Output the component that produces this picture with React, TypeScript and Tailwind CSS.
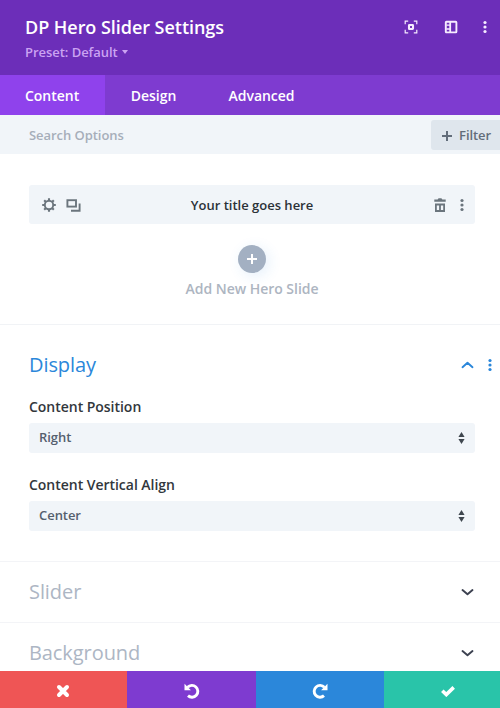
import type { ReactNode } from "react";

const Dots = ({ className }: { className?: string }) => (
  <svg className={className} width="4" height="14" viewBox="0 0 4 14" fill="currentColor">
    <circle cx="2" cy="2.5" r="1.6" />
    <circle cx="2" cy="7" r="1.6" />
    <circle cx="2" cy="11.5" r="1.6" />
  </svg>
);

const FocusIcon = () => (
  <svg width="14" height="14" viewBox="0 0 14 14" fill="none" stroke="currentColor">
    <path d="M1.2 4.2V1.2h3M9.8 1.2h3v3M12.8 9.8v3h-3M4.2 12.8h-3v-3" strokeWidth="1.2" />
    <rect x="5" y="5" width="4" height="4" rx="0.4" strokeWidth="2.1" />
  </svg>
);

const LayoutIcon = () => (
  <svg width="14" height="14" viewBox="0 0 14 14" fill="none" stroke="currentColor">
    <rect x="1.8" y="1.8" width="10.6" height="10.6" rx="0.6" strokeWidth="1.9" />
    <path d="M6.2 1.5v11" strokeWidth="1.8" />
    <path d="M2.4 5.2h4M2.4 9h4" strokeWidth="1.3" />
  </svg>
);

const GearIcon = () => (
  <svg width="14" height="14" viewBox="0 0 14 14" fill="none" stroke="currentColor">
    <circle cx="7" cy="7" r="4.2" strokeWidth="1.9" />
    <path
      d="M7 0.2v2.4M7 11.4v2.4M0.2 7h2.4M11.4 7h2.4M2.2 2.2l1.7 1.7M10.1 10.1l1.7 1.7M2.2 11.8l1.7-1.7M10.1 3.9l1.7-1.7"
      strokeWidth="2.1"
    />
  </svg>
);

const CloneIcon = () => (
  <svg width="15" height="13" viewBox="0 0 15 13" fill="none" stroke="currentColor" strokeWidth="1.9">
    <rect x="1.4" y="1.2" width="8.6" height="6.4" />
    <path d="M13.6 4.6v7.2H5" />
  </svg>
);

const TrashIcon = () => (
  <svg width="12" height="14" viewBox="0 0 12 14" fill="currentColor">
    <path d="M0.3 1.6h3.3L4.6 0.2h2.8l1 1.4h3.3v2.2H0.3z" />
    <path fillRule="evenodd" d="M1 5.4h10V14H1zM2.8 7.4v4.6h2.3V7.4zM6.9 7.4v4.6h2.3V7.4z" />
  </svg>
);

const Chevron = ({ up }: { up?: boolean }) => (
  <svg width="13" height="8" viewBox="0 0 13 8" fill="none" stroke="currentColor" strokeWidth="1.9" strokeLinecap="round" strokeLinejoin="round">
    <path d={up ? "M1.5 6.2L6.5 1.7l5 4.5" : "M1.5 2l5 4.3 5-4.3"} />
  </svg>
);

const Plus = () => (
  <svg width="10" height="10" viewBox="0 0 10 10" fill="none" stroke="currentColor" strokeWidth="2">
    <path d="M5 0v10M0 5h10" />
  </svg>
);

const SelectField = ({ label, value }: { label: string; value: string }) => (
  <div className="h-[78px] pr-[25px] pl-[29px]">
    <div className="h-[26px] text-[14px] leading-[19px] font-semibold tracking-[-0.03px] text-[#32373c]">{label}</div>
    <div className="flex h-[30px] items-center justify-between rounded-[3px] bg-[#f1f5f9] pr-[10px] pl-[10px] text-[13px] font-semibold tracking-[-0.05px] text-[#55606e]">
      {value}
      <svg width="7" height="12" viewBox="0 0 7 12" fill="#3f474f">
        <path d="M3.5 0L6.6 5H0.4zM3.5 12L6.6 7H0.4z" />
      </svg>
    </div>
  </div>
);

const ClosedSection = ({ title }: { title: string }) => (
  <div className="flex h-[61px] items-center justify-between border-t border-[#f3f4f7] pr-[26px] pl-[29px] text-[#3c4150]">
    <span className="text-[20px] tracking-[-0.08px] text-[#adb6c4]">{title}</span>
    <Chevron />
  </div>
);

const FooterButton = ({ className, children }: { className: string; children: ReactNode }) => (
  <button className={`flex h-[37px] items-center justify-center pt-[3px] ${className}`}>{children}</button>
);

export default function App() {
  return (
    <div className="flex h-[708px] w-[500px] flex-col overflow-hidden bg-white font-['Open_Sans',sans-serif]">
      <header className="flex h-[75px] shrink-0 justify-between bg-[#6c2eb9] pr-[13px] pl-[25px] text-white">
        <div className="pt-[15px]">
          <h1 className="text-[18px] leading-[25px] font-semibold tracking-[-0.04px]">DP Hero Slider Settings</h1>
          <div className="mt-[2px] flex items-center gap-[4px] text-[13px] leading-[20px] font-semibold tracking-[-0.04px] text-[#cba3f2]">
            Preset: Default
            <svg width="6" height="4" viewBox="0 0 6 4" fill="currentColor">
              <path d="M0 0h6L3 4z" />
            </svg>
          </div>
        </div>
        <div className="mt-[20px] flex h-[14px] items-center text-[#f6ecff]">
          <FocusIcon />
          <span className="w-[26px]" />
          <LayoutIcon />
          <Dots className="ml-[25px]" />
        </div>
      </header>

      <nav className="flex h-[40px] shrink-0 bg-[#7e3bd0] text-[14px] font-semibold tracking-[-0.03px] text-white">
        <div className="flex w-[105px] items-center bg-[#8f42ec] pl-[25px]">Content</div>
        <div className="flex w-[97px] items-center justify-center">Design</div>
        <div className="flex w-[119px] items-center justify-center">Advanced</div>
      </nav>

      <div className="flex h-[39px] shrink-0 items-center justify-between bg-[#f1f5f9] pt-px pl-[29px]">
        <span className="pt-px text-[13px] font-semibold tracking-[-0.05px] text-[#a6aeb9]">Search Options</span>
        <button className="flex h-[30px] w-[69px] items-center gap-[7px] rounded-l-[3px] bg-[#dfe6ed] pt-px pl-[11px] text-[13px] font-semibold tracking-[-0.05px] text-[#626d7a]">
          <Plus />
          Filter
        </button>
      </div>

      <main className="min-h-0 flex-1 overflow-hidden">
        <div className="h-[170px] pt-[31px] pr-[25px] pl-[29px]">
          <div className="flex h-[39px] items-center rounded-[3px] bg-[#f1f5f9] pr-[11px] pl-[13px] text-[#6b757d]">
            <div className="flex w-[48px] items-center gap-[10px] pt-px">
              <GearIcon />
              <CloneIcon />
            </div>
            <span className="flex-1 pt-[2px] pr-[20px] text-center text-[13px] font-semibold text-[#2b3137]">Your title goes here</span>
            <div className="flex items-center gap-[14px] pt-px">
              <TrashIcon />
              <Dots />
            </div>
          </div>
          <div className="mt-[21px] flex flex-col items-center">
            <button className="flex size-[28px] items-center justify-center rounded-full bg-[#a3b0c2] text-white shadow-[3px_3px_14px_rgba(43,135,218,0.12)]">
              <Plus />
            </button>
            <span className="mt-[6px] text-[14px] leading-[20px] font-semibold tracking-[-0.03px] text-[#adb5c1]">Add New Hero Slide</span>
          </div>
        </div>

        <section className="h-[237px] border-t border-[#f1f3f6]">
          <div className="flex h-[72px] items-center justify-between pt-[8px] pr-[8px] pl-[29px] text-[#2b87da]">
            <h2 className="text-[20px] leading-[28px] tracking-[-0.08px]">Display</h2>
            <div className="flex items-center gap-[14px]">
              <Chevron up />
              <Dots />
            </div>
          </div>
          <SelectField label="Content Position" value="Right" />
          <SelectField label="Content Vertical Align" value="Center" />
        </section>

        <ClosedSection title="Slider" />
        <ClosedSection title="Background" />
      </main>

      <footer className="flex h-[37px] shrink-0 text-white">
        <FooterButton className="w-[127px] bg-[#ef5555] pr-[2px]">
          <svg width="14" height="14" viewBox="0 0 14 14" stroke="currentColor" strokeWidth="4" strokeLinecap="round">
            <path d="M3 3l8 8M11 3l-8 8" />
          </svg>
        </FooterButton>
        <FooterButton className="w-[129px] bg-[#7e3bd0]">
          <svg width="16" height="16" viewBox="0 0 16 16" fill="none" stroke="currentColor" strokeWidth="2.9">
            <path d="M3.6 4.3A5.9 5.9 0 1 1 4 12.7" />
            <path d="M0.5 0.8v6.4h6.4z" fill="currentColor" stroke="none" />
          </svg>
        </FooterButton>
        <FooterButton className="w-[128px] bg-[#2b87da]">
          <svg width="16" height="16" viewBox="0 0 16 16" fill="none" stroke="currentColor" strokeWidth="2.9">
            <path d="M12.4 4.3A5.9 5.9 0 1 0 12 12.7" />
            <path d="M15.5 0.8v6.4H9.1z" fill="currentColor" stroke="none" />
          </svg>
        </FooterButton>
        <FooterButton className="w-[116px] bg-[#29c4a9] pl-[11px]">
          <svg width="14" height="11" viewBox="0 0 14 11" fill="none" stroke="currentColor" strokeWidth="3.6">
            <path d="M1.3 4.8l4 3.8 7.4-7.2" />
          </svg>
        </FooterButton>
      </footer>
    </div>
  );
}
